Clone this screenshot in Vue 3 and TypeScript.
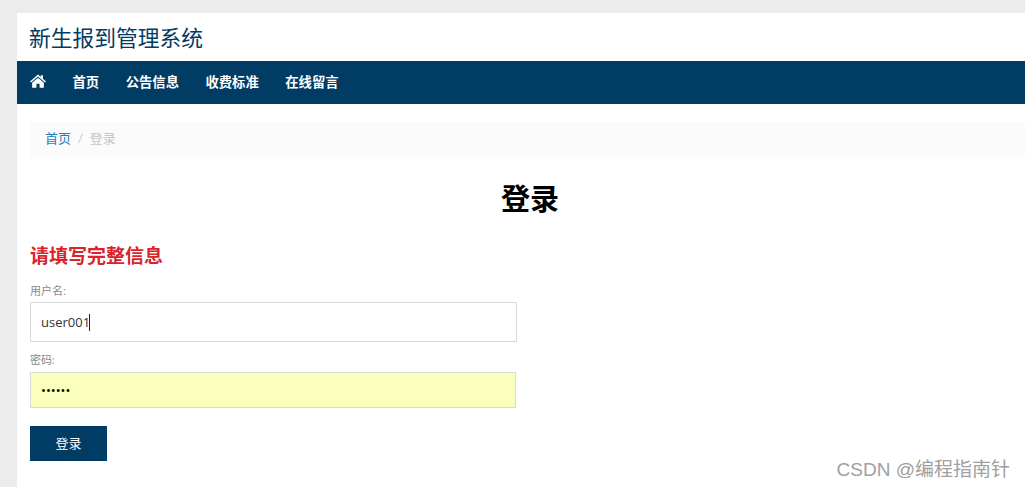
<script setup lang="ts">
import { ref } from 'vue'

const navItems = ['首页', '公告信息', '收费标准', '在线留言']
const username = ref('user001')
const password = ref('123456')
</script>

<template>
  <div class="wrapper">
    <header class="site-head">
      <h1 class="site-title">新生报到管理系统</h1>
    </header>
    <nav class="main-nav">
      <a class="nav-home" href="#" aria-label="home">
        <svg viewBox="0 0 26 22" width="16" height="14">
          <path fill="#fff" d="M13 0.5 L17.5 4.4 V1.5 H21 V7.4 L26 11.8 L24.4 13.6 L13 3.7 L1.6 13.6 L0 11.8 Z" />
          <path fill="#fff" d="M13 5.6 L22.5 13.8 V22 H15.6 V15.4 H10.4 V22 H3.5 V13.8 Z" />
        </svg>
      </a>
      <a v-for="item in navItems" :key="item" class="nav-link" href="#">{{ item }}</a>
    </nav>
    <main class="content">
      <div class="breadcrumb">
        <a href="#">首页</a>
        <span class="sep">/</span>
        <span class="current">登录</span>
      </div>
      <h2 class="page-title">登录</h2>
      <form class="login-form" @submit.prevent>
        <h3 class="form-tip">请填写完整信息</h3>
        <label class="field-label" for="username">用户名:</label>
        <div class="input-wrap">
          <input id="username" v-model="username" class="field user-field" type="text" />
          <span class="caret"></span>
        </div>
        <label class="field-label pass-label" for="password">密码:</label>
        <input id="password" v-model="password" class="field pass-field" type="password" />
        <button class="submit-btn" type="submit">登录</button>
      </form>
    </main>
    <div class="watermark">CSDN @编程指南针</div>
  </div>
</template>

<style>
html,
body {
  margin: 0;
  height: 100%;
  overflow: hidden;
  background: #ececec;
}
</style>

<style scoped>
.wrapper {
  position: relative;
  box-sizing: border-box;
  width: 1013px;
  height: 474px;
  margin: 13px 0 0 17px;
  background: #fff;
  font-family: "Open Sans", "Noto Sans CJK SC", sans-serif;
  color: #333;
}
.site-head {
  height: 48px;
  box-sizing: border-box;
  padding: 0 0 2px 12px;
  display: flex;
  align-items: center;
}
.site-title {
  margin: 0;
  font-size: 21.75px;
  font-weight: 400;
  color: #003c64;
}
.main-nav {
  height: 43px;
  background: #003c64;
  display: flex;
  align-items: center;
  padding-left: 13px;
  gap: 26.5px;
}
.nav-home {
  display: flex;
  margin-top: -3px;
}
.nav-link {
  color: #fff;
  font-size: 13.33px;
  font-weight: 700;
  text-decoration: none;
  margin-top: -3px;
}
.content {
  padding: 18px 0 0 13px;
}
.breadcrumb {
  height: 35px;
  box-sizing: border-box;
  padding: 0 0 4px 15px;
  background: #fbfbfb;
  display: flex;
  align-items: center;
  font-size: 13px;
}
.breadcrumb a {
  color: #1b7fc4;
  text-decoration: none;
}
.sep {
  margin: 0 7px;
  color: #ccc;
}
.current {
  color: #c4c4c4;
}
.page-title {
  margin: 24px 0 0;
  height: 36px;
  line-height: 36px;
  text-align: center;
  font-size: 29px;
  font-weight: 700;
  color: #000;
}
.login-form {
  display: flex;
  flex-direction: column;
  align-items: flex-start;
  margin-top: 26px;
}
.form-tip {
  margin: 0 0 14px;
  height: 26px;
  line-height: 26px;
  font-size: 19px;
  font-weight: 700;
  color: #d9232d;
}
.field-label {
  height: 15px;
  line-height: 15px;
  font-size: 11px;
  color: #8a8a8a;
  margin-bottom: 4px;
}
.pass-label {
  margin-top: -1px;
  margin-bottom: 5px;
}
.input-wrap {
  position: relative;
  margin-bottom: 11px;
}
.field {
  display: block;
  box-sizing: border-box;
  padding: 0 10px;
  border: 1px solid #d9d9d9;
  outline: none;
  border-radius: 0;
  font-family: inherit;
  font-size: 13px;
  color: #333;
}
.user-field {
  width: 487px;
  height: 40px;
  background: #fff;
}
.caret {
  position: absolute;
  left: 59px;
  top: 12px;
  width: 1px;
  height: 17px;
  background: #222;
}
.pass-field {
  width: 486px;
  height: 36px;
  background: #fbffbe;
  color: #000;
}
.submit-btn {
  margin-top: 18px;
  width: 77px;
  height: 35px;
  padding: 0 0 3px;
  border: 0;
  border-radius: 0;
  background: #003c64;
  color: #fff;
  font-family: inherit;
  font-size: 13px;
  cursor: pointer;
}
.watermark {
  position: absolute;
  right: 20px;
  top: 446px;
  font-family: "Liberation Sans", "Noto Sans CJK SC", sans-serif;
  font-size: 19px;
  line-height: 22px;
  color: #a0a0a0;
}
</style>
